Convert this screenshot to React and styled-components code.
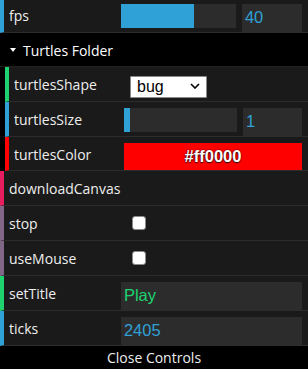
import React from "react";
import styled, { createGlobalStyle } from "styled-components";

const colors = {
  number: "#2fa1d6",
  string: "#1ed36f",
  func: "#e61d5f",
  bool: "#806787",
  row: "#1a1a1a",
  field: "#2c2c2c",
  line: "#2c2c2c",
  text: "#eeeeee",
};

const GlobalStyle = createGlobalStyle`
  html, body {
    margin: 0;
    padding: 0;
    background: #000;
  }
  body {
    width: 308px;
    height: 369px;
    overflow: hidden;
    font-family: "Open Sans", "Noto Sans", sans-serif;
  }
`;

const Panel = styled.div`
  width: 308px;
  margin-top: -2px;
  background: #000;
`;

const Row = styled.div`
  display: grid;
  grid-template-columns: 38.2% 1fr;
  box-sizing: border-box;
  height: ${(p) => p.$h || 35}px;
  padding: 0 6px 0 5px;
  background: ${colors.row};
  border-left: 4px solid ${(p) => p.$accent};
  border-bottom: 1px solid ${colors.line};
`;

const Label = styled.div`
  display: flex;
  align-items: center;
  padding-top: 1px;
  font-size: 14px;
  color: ${colors.text};
  white-space: nowrap;
  overflow: hidden;
`;

const Control = styled.div`
  display: flex;
  align-items: ${(p) => (p.$center ? "center" : "flex-start")};
  min-width: 0;
`;

const Track = styled.div`
  width: 63.5%;
  height: 24px;
  margin-top: 6px;
  background: ${colors.field};
`;

const Fill = styled.div`
  height: 100%;
  background: ${colors.number};
`;

const Field = styled.div`
  flex: 1;
  display: flex;
  align-items: center;
  box-sizing: border-box;
  height: 28px;
  margin-top: 6px;
  margin-left: ${(p) => p.$ml || 0}px;
  padding: 0 0 2px 3px;
  background: ${colors.field};
  color: ${(p) => p.$color};
  font-family: "Liberation Sans", Arial, sans-serif;
  font-size: 16.5px;
`;

const ColorSwatch = styled.div`
  flex: 1;
  display: flex;
  align-items: center;
  justify-content: center;
  height: 27px;
  margin-top: 6px;
  background: ${(p) => p.$color};
  color: #fff;
  font-family: "Liberation Sans", Arial, sans-serif;
  font-weight: bold;
  font-size: 16.5px;
  text-shadow: 0 0 2px rgba(0, 0, 0, 0.8), 0 1px 1px rgba(0, 0, 0, 0.7);
`;

const SelectWrap = styled.div`
  position: relative;
  width: 77px;
  height: 22px;
  margin: 8px 0 0 6px;
`;

const Select = styled.select`
  appearance: none;
  width: 100%;
  height: 100%;
  box-sizing: border-box;
  margin: 0;
  padding: 0 0 1px 6px;
  border: 1px solid #8a8a8a;
  border-radius: 1px;
  background: #fff;
  color: #000;
  font-family: "Liberation Sans", Arial, sans-serif;
  font-size: 16px;
`;

const Chevron = styled.svg`
  position: absolute;
  right: 7px;
  top: 8px;
  pointer-events: none;
`;

const Checkbox = styled.input`
  appearance: none;
  width: 14px;
  height: 14px;
  margin: 0 0 0 11px;
  box-sizing: border-box;
  border: 1px solid #8a8a8a;
  border-radius: 3px;
  background: #fff;
`;

const Title = styled.div`
  display: flex;
  align-items: center;
  box-sizing: border-box;
  height: 34px;
  padding: 1px 0 0 10px;
  background: #000;
  border-bottom: 1px solid #222;
  color: #fff;
  font-size: 14px;
`;

const Arrow = styled.svg`
  margin-right: 7px;
`;

const Folder = styled.div`
  padding-left: 5px;
  background: #000;
`;

const CloseButton = styled.div`
  height: 25px;
  line-height: 24px;
  text-align: center;
  background: #000;
  color: ${colors.text};
  font-size: 14px;
`;

function NumberRow({ label, value, min, max }) {
  const pct = ((value - min) / (max - min)) * 100;
  return (
    <Row $accent={colors.number}>
      <Label>{label}</Label>
      <Control>
        <Track>
          <Fill style={{ width: `${pct}%` }} />
        </Track>
        <Field $ml={6} $color={colors.number}>{value}</Field>
      </Control>
    </Row>
  );
}

function BoolRow({ label }) {
  return (
    <Row $accent={colors.bool}>
      <Label>{label}</Label>
      <Control $center>
        <Checkbox type="checkbox" />
      </Control>
    </Row>
  );
}

function TextRow({ label, value, accent }) {
  return (
    <Row $accent={accent}>
      <Label>{label}</Label>
      <Control>
        <Field $color={accent}>{value}</Field>
      </Control>
    </Row>
  );
}

export default function App() {
  return (
    <>
      <GlobalStyle />
      <Panel>
        <NumberRow label="fps" value={40} min={5} max={60} />
        <Title>
          <Arrow width="6" height="4" viewBox="0 0 6 4">
            <polygon points="0,0 6,0 3,4" fill="#fff" />
          </Arrow>
          Turtles Folder
        </Title>
        <Folder>
          <Row $accent={colors.string}>
            <Label>turtlesShape</Label>
            <Control>
              <SelectWrap>
                <Select defaultValue="bug">
                  <option value="default">default</option>
                  <option value="bug">bug</option>
                  <option value="circle">circle</option>
                </Select>
                <Chevron width="10" height="6" viewBox="0 0 10 6">
                  <polyline points="1,1 5,5 9,1" fill="none" stroke="#000" strokeWidth="1.6" />
                </Chevron>
              </SelectWrap>
            </Control>
          </Row>
          <NumberRow label="turtlesSize" value={1} min={0} max={20} />
          <Row $accent="#ff0000" $h={34}>
            <Label>turtlesColor</Label>
            <Control>
              <ColorSwatch $color="#ff0000">#ff0000</ColorSwatch>
            </Control>
          </Row>
        </Folder>
        <Row $accent={colors.func}>
          <Label>downloadCanvas</Label>
          <Control />
        </Row>
        <BoolRow label="stop" />
        <BoolRow label="useMouse" />
        <TextRow label="setTitle" value="Play" accent={colors.string} />
        <TextRow label="ticks" value="2405" accent={colors.number} />
        <CloseButton>Close Controls</CloseButton>
      </Panel>
    </>
  );
}
